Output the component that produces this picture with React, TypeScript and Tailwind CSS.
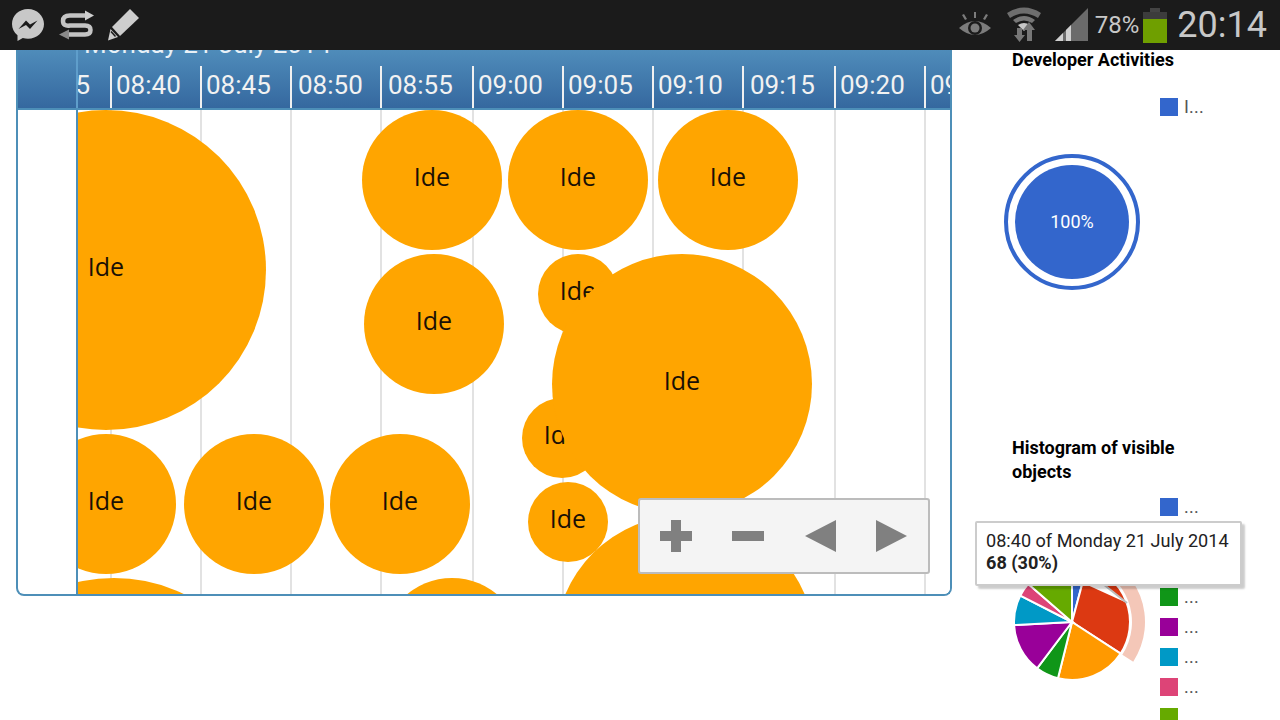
import React from "react";

const ticks = [
  { label: "08:40", w: "w-[90px] pl-[4px]" },
  { label: "08:45", w: "w-[90px] pl-[4px]" },
  { label: "08:50", w: "w-[90px] pl-[6px]" },
  { label: "08:55", w: "w-[92px] pl-[6px]" },
  { label: "09:00", w: "w-[90px] pl-[4px]" },
  { label: "09:05", w: "w-[90px] pl-[4px]" },
  { label: "09:10", w: "w-[90px] pl-[4px]" },
  { label: "09:15", w: "w-[92px] pl-[6px]" },
  { label: "09:20", w: "w-[90px] pl-[4px]" },
  { label: "09:25", w: "w-[90px] pl-[4px]" },
];
const grid = [110, 200, 290, 380, 472, 562, 652, 742, 834, 924];
const circles = [
  { x: 106, y: 270, r: 160 },
  { x: 432, y: 180, r: 70 },
  { x: 578, y: 180, r: 70 },
  { x: 728, y: 180, r: 70 },
  { x: 434, y: 324, r: 70 },
  { x: 578, y: 294, r: 40 },
  { x: 562, y: 438, r: 40 },
  { x: 682, y: 384, r: 130 },
  { x: 106, y: 504, r: 70 },
  { x: 254, y: 504, r: 70 },
  { x: 400, y: 504, r: 70 },
  { x: 568, y: 522, r: 40 },
  { x: 114, y: 738, r: 160 },
  { x: 452, y: 648, r: 70 },
  { x: 685, y: 645, r: 130 },
];
const legend = [
  ["bg-[#3366cc]", "..."],
  ["bg-[#dc3912]", "..."],
  ["bg-[#ff9900]", "..."],
  ["bg-[#109618]", "..."],
  ["bg-[#990099]", "..."],
  ["bg-[#0099c6]", "..."],
  ["bg-[#dd4477]", "..."],
  ["bg-[#66aa00]", ""],
];

function polar(cx: number, cy: number, r: number, deg: number) {
  const a = ((deg - 90) * Math.PI) / 180;
  return [cx + r * Math.cos(a), cy + r * Math.sin(a)];
}
function slice(cx: number, cy: number, r: number, a: number, b: number) {
  const [x1, y1] = polar(cx, cy, r, a);
  const [x2, y2] = polar(cx, cy, r, b);
  return `M${cx} ${cy}L${x1} ${y1}A${r} ${r} 0 ${b - a > 180 ? 1 : 0} 1 ${x2} ${y2}Z`;
}
function ring(cx: number, cy: number, r0: number, r1: number, a: number, b: number) {
  const [x1, y1] = polar(cx, cy, r1, a);
  const [x2, y2] = polar(cx, cy, r1, b);
  const [x3, y3] = polar(cx, cy, r0, b);
  const [x4, y4] = polar(cx, cy, r0, a);
  return `M${x1} ${y1}A${r1} ${r1} 0 0 1 ${x2} ${y2}L${x3} ${y3}A${r0} ${r0} 0 0 0 ${x4} ${y4}Z`;
}
const pie: [string, number, number][] = [
  ["#3366cc", 0, 15],
  ["#dc3912", 15, 123],
  ["#ff9900", 123, 194],
  ["#109618", 194, 217],
  ["#990099", 217, 267],
  ["#0099c6", 267, 297],
  ["#dd4477", 297, 311],
  ["#66aa00", 311, 360],
];

function Messenger() {
  return (
    <svg width="34" height="34" viewBox="0 0 34 34">
      <path d="M17 1C8 1 1 7.500 1 16c0 4.500 2 8.500 5.500 11.300V33l5.300-3c1.600.5 3.400.7 5.200.7 9 0 16-6.500 16-14.700S26 1 17 1z" fill="#c8c8c8" />
      <path d="M7.500 21l7.500-8.500 4 4 7.500-4-7.500 8.500-4-4z" fill="#1b1b1b" />
    </svg>
  );
}
function SyncS() {
  return (
    <svg width="36" height="30" viewBox="0 0 36 30">
      <path d="M27 5.500H11Q4 5.500 4 11T11 15.500H26Q31.500 15.500 31.500 20T26 24.500H10" fill="none" stroke="#c4c4c4" strokeWidth="4.500" />
      <path d="M26 0.500L35 5.500L26 10.500z" fill="#d0d0d0" />
      <path d="M10 19.500L0 24.500L10 29.500z" fill="#8a8a8a" />
    </svg>
  );
}
function Pencil() {
  return (
    <svg width="32" height="32" viewBox="0 0 32 32">
      <path d="M22 0L31 9L12 27L4 18z" fill="#cdcdcd" />
      <path d="M2.500 20L10 28L0 31.500z" fill="#cdcdcd" />
      <path d="M3 22.500L7.500 27.500" stroke="#1b1b1b" strokeWidth="1.500" />
    </svg>
  );
}
function Eye() {
  return (
    <svg width="32" height="26" viewBox="0 0 32 26">
      <path d="M0 16Q16 2 32 16Q16 30 0 16z" fill="#7c7c7c" />
      <circle cx="16" cy="16" r="7" fill="#1b1b1b" />
      <circle cx="16" cy="16" r="4.500" fill="#7c7c7c" />
      <path d="M15 0h2v6h-2zM3 3l2-1 3 5-2 1zM29 3l-2-1-3 5 2 1z" fill="#7c7c7c" />
    </svg>
  );
}
function Wifi() {
  return (
    <svg width="34" height="36" viewBox="0 0 34 36">
      <path d="M0 6Q17-5 34 6L31 11Q17 2 3 11z" fill="#6e6e6e" />
      <path d="M6 13Q17 5 28 13L25 16Q17 11 9 16z" fill="#777" />
      <path d="M11 18Q17 14 23 18L17 24z" fill="#c8c8c8" />
      <path d="M10 21h5v7h3l-5.500 7-5.500-7h3z" fill="#777" />
      <path d="M22 15l6 8h-3v11h-5V23h-4z" fill="#777" />
    </svg>
  );
}
function Signal() {
  return (
    <svg width="34" height="34" viewBox="0 0 34 34">
      <path d="M33 0V33H0z" fill="#6b6b6b" />
      <path d="M0 33L8 25V33z" fill="#d0d0d0" />
      <path d="M11 22L16 17V33H11z" fill="#d0d0d0" />
    </svg>
  );
}

function Controls() {
  return (
    <div className="absolute left-[560px] top-[388px] flex h-[76px] w-[292px] items-center gap-[40px] rounded-[3px] border-2 border-[#bcbcbc] bg-[#f4f4f4] pl-[20px]">
      <svg width="32" height="32" viewBox="0 0 32 32" className="blur-[0.5px]"><path d="M11 0h10v11h11v10H21v11H11V21H0V11h11z" fill="#808080" /></svg>
      <svg width="32" height="32" viewBox="0 0 32 32" className="blur-[0.5px]"><path d="M0 11h32v10H0z" fill="#808080" /></svg>
      <svg width="32" height="32" viewBox="0 0 32 32" className="blur-[0.5px]"><path d="M32 0V32L1 16z" fill="#808080" /></svg>
      <svg width="32" height="32" viewBox="0 0 32 32" className="blur-[0.5px]"><path d="M0 0V32L31 16z" fill="#808080" /></svg>
    </div>
  );
}

function Legend({ items }: { items: string[][] }) {
  return (
    <div className="flex flex-col">
      {items.map(([c, t], i) => (
        <div key={i} className="flex h-[30px] items-center gap-[6px]">
          <span className={`h-[18px] w-[18px] ${c}`} />
          <span className="text-[18px] leading-none tracking-[0.2px] text-[#555]">{t}</span>
        </div>
      ))}
    </div>
  );
}

export default function App() {
  return (
    <div className="relative flex h-[720px] w-[1280px] flex-col overflow-hidden bg-white font-['Roboto',sans-serif]">
      <header className="z-10 flex h-[50px] shrink-0 items-center bg-[#1b1b1b] pl-[11px] pr-[13px]">
        <div className="flex items-center">
          <Messenger />
          <div className="ml-[14px]"><SyncS /></div>
          <div className="ml-[13px]"><Pencil /></div>
        </div>
        <div className="ml-auto flex items-center">
          <Eye />
          <div className="ml-[16px]"><Wifi /></div>
          <div className="ml-[14px]"><Signal /></div>
          <span className="ml-[6px] text-[24px] leading-none text-[#c8c8c8]">78%</span>
          <div className="ml-[4px] flex h-[35px] w-[24px] flex-col items-center">
            <span className="h-[4px] w-[10px] bg-[#444]" />
            <span className="h-[7px] w-full bg-[#3c3c3c]" />
            <span className="w-full flex-1 bg-[#6f9f00]" />
          </div>
          <span className="ml-[10px] text-[36px] leading-none text-[#c8c8c8]">20:14</span>
        </div>
      </header>

      <main className="flex min-h-0 flex-1 items-start">
        <section className="ml-[16px] flex h-[546px] w-[936px] shrink-0 flex-col overflow-hidden rounded-b-[8px] border-x-2 border-b-2 border-[#4d8fb8]">
          <div className="flex h-[60px] shrink-0 border-b-2 border-[#4d8fb8] bg-gradient-to-b from-[#4f8cba] to-[#35689f]">
            <div className="w-[60px] shrink-0 border-r-2 border-[#5f9ecb]" />
            <div className="min-w-0 flex-1 overflow-hidden">
              <div className="h-[16px] overflow-hidden">
                <div className="-mt-[19px] ml-[6px] whitespace-nowrap text-[26px] leading-[26px] text-[#e8f0f6]">Monday 21 July 2014</div>
              </div>
              <div className="flex h-[42px]">
                <div className="flex w-[32px] shrink-0 items-center justify-end overflow-hidden pb-[4px] pr-[20px] text-[26px] text-[#f2f2f2]">
                  <span>5</span>
                </div>
                {ticks.map((t) => (
                  <div key={t.label} className={`${t.w} flex shrink-0 items-center border-l-2 border-[#f0f0f0] pb-[4px] text-[26px] text-[#f2f2f2]`}>
                    {t.label}
                  </div>
                ))}
              </div>
            </div>
          </div>
          <div className="flex min-h-0 flex-1">
            <div className="w-[60px] shrink-0 border-r-2 border-[#4d8fb8]" />
            <div className="relative min-w-0 flex-1 overflow-hidden bg-white">
              {grid.map((x) => (
                <span key={x} className="absolute top-0 h-full w-[2px] bg-[#e2e2e2]" style={{ left: x - 78 }} />
              ))}
              {circles.map((c, i) => (
                <div
                  key={i}
                  className="absolute flex items-center justify-center rounded-full bg-[#ffa500] pb-[8px] font-['Open_Sans',sans-serif] text-[25px] leading-none text-[#1a1005]"
                  style={{ left: c.x - c.r - 78, top: c.y - c.r - 110, width: c.r * 2, height: c.r * 2 }}
                >
                  Ide
                </div>
              ))}
              <Controls />
            </div>
          </div>
        </section>

        <aside className="ml-[60px] w-[200px] shrink-0">
          <h2 className="h-[20px] text-[18px] font-bold leading-[20px] text-black">Developer Activities</h2>
          <div className="flex items-start">
            <div className="-ml-[8px] mt-[84px] h-[136px] w-[156px]">
              <svg width="136" height="136" viewBox="0 0 136 136">
                <circle cx="68" cy="68" r="66" fill="none" stroke="#3366cc" strokeWidth="4" />
                <circle cx="68" cy="68" r="57" fill="#3366cc" />
                <text x="68" y="74" textAnchor="middle" fontSize="18" fill="#fff">100%</text>
              </svg>
            </div>
            <div className="mt-[22px]">
              <Legend items={[["bg-[#3366cc]", "I..."]]} />
            </div>
          </div>
          <h2 className="mt-[146px] w-[190px] text-[18px] font-bold leading-[24px] text-black">Histogram of visible objects</h2>
          <div className="mt-[8px] flex items-start">
            <div className="-ml-[8px] mt-[57px] h-[146px] w-[156px]">
              <svg width="156" height="146" viewBox="0 0 156 146">
                <path d={ring(68, 73, 60, 73, 15, 123)} fill="#f4c7b8" />
                {pie.map(([c, a, b]) => (
                  <path key={c} d={slice(68, 73, 58, a, b)} fill={c} stroke="#fff" strokeWidth="2" />
                ))}
              </svg>
            </div>
            <Legend items={legend} />
          </div>
        </aside>
      </main>

      <svg width="60" height="30" viewBox="0 0 60 30" className="absolute left-[1075px] top-[580px]">
        <path d="M8 3H28L52 23z" fill="#fff" />
        <path d="M28 4L52 23" stroke="#bdbdbd" strokeWidth="2" />
      </svg>
      <div className="absolute left-[975px] top-[521px] h-[65px] w-[267px] rounded-[2px] border-2 border-[#ccc] bg-white px-[9px] pt-[7px] text-[18.1px] leading-[22px] text-[#222] shadow-[3px_3px_2px_rgba(0,0,0,0.2)]">
        <div className="whitespace-nowrap">08:40 of Monday 21 July 2014</div>
        <div className="font-bold">68 (30%)</div>
      </div>
    </div>
  );
}
